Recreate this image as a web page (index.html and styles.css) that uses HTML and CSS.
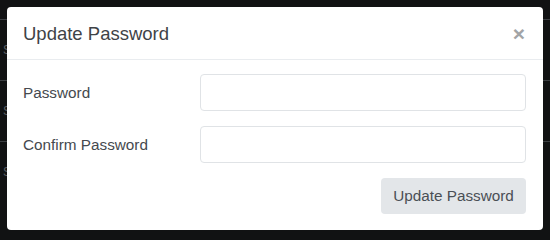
FILE: index.html
```html
<!DOCTYPE html>
<html lang="en">
<head>
<meta charset="utf-8">
<title>Update Password</title>
<link rel="stylesheet" href="styles.css">
</head>
<body>
<div class="page">
  <div class="row"><span class="cell">Sample</span></div>
  <div class="row"><span class="cell">Sample</span></div>
  <div class="row"><span class="cell">Sample</span></div>
</div>
<div class="modal">
  <div class="modal-header">
    <h5 class="modal-title">Update Password</h5>
    <button class="close" type="button" aria-label="Close">×</button>
  </div>
  <form class="modal-body">
    <div class="form-row">
      <label class="form-label" for="pw">Password</label>
      <input class="form-input" id="pw" type="password">
    </div>
    <div class="form-row">
      <label class="form-label" for="pw2">Confirm Password</label>
      <input class="form-input" id="pw2" type="password">
    </div>
    <div class="actions">
      <button class="btn" type="button">Update Password</button>
    </div>
  </form>
</div>
</body>
</html>
```
FILE: styles.css
```css
html, body {
  margin: 0;
  padding: 0;
}
body {
  width: 550px;
  height: 240px;
  background: #111213;
  font-family: "Liberation Sans", Arial, sans-serif;
  position: relative;
  overflow: hidden;
}
.page {
  padding-top: 19px;
}
.row {
  height: 60px;
  border-top: 1px solid #3c3f42;
  display: flex;
  align-items: center;
  padding-left: 3px;
}
.cell {
  color: #5b5f63;
  font-size: 12px;
}
.modal {
  position: absolute;
  left: 7px;
  top: 7px;
  width: 536px;
  height: 223px;
  background: #fff;
  border-radius: 4px;
  display: flex;
  flex-direction: column;
  box-sizing: border-box;
}
.modal-header {
  height: 53px;
  box-sizing: border-box;
  border-bottom: 1px solid #e9ecef;
  display: flex;
  align-items: center;
  justify-content: space-between;
  padding: 0 18px 0 16px;
}
.modal-title {
  margin: 0;
  font-size: 18.5px;
  font-weight: 400;
  color: #3f4347;
  padding-top: 1px;
}
.close {
  border: 0;
  background: none;
  padding: 0;
  font-family: "Liberation Sans", Arial, sans-serif;
  font-size: 21px;
  font-weight: 700;
  color: #a2a4a6;
  line-height: 1;
}
.modal-body {
  margin: 0;
  padding: 14px 17px 16px 16px;
  display: flex;
  flex-direction: column;
  gap: 15px;
}
.form-row {
  display: grid;
  grid-template-columns: 177px 1fr;
  align-items: center;
}
.form-label {
  font-size: 15.3px;
  color: #45494e;
}
.form-input {
  height: 37px;
  box-sizing: border-box;
  border: 1px solid #e0e3e6;
  border-radius: 4px;
  background: #fff;
  margin: 0;
}
.actions {
  display: flex;
  justify-content: flex-end;
}
.btn {
  width: 145px;
  height: 36px;
  border: 0;
  border-radius: 4px;
  background: #e3e6e9;
  color: #4a4f55;
  font-family: "Liberation Sans", Arial, sans-serif;
  font-size: 15.3px;
  padding: 0;
}
```
